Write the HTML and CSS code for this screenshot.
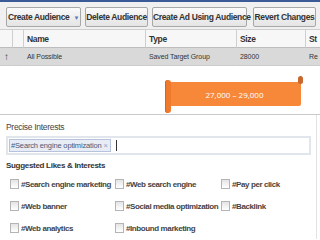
FILE: index.html
```html
<!DOCTYPE HTML>
<html>
<head>
    <meta charset="UTF-8">
    <title>Audience</title>
    <link rel="stylesheet" href="styles.css">
</head>
<body>
    <div class="topbar"></div>
    <div class="toolbar">
        <button class="tb-button w-create">Create Audience <span class="caret-down">&#9660;</span></button>
        <button class="tb-button w-delete">Delete Audience</button>
        <button class="tb-button w-ad">Create Ad Using Audience</button>
        <button class="tb-button w-revert">Revert Changes</button>
    </div>
    <div class="grid">
        <div class="cell head"></div>
        <div class="cell head"></div>
        <div class="cell head">Name</div>
        <div class="cell head">Type</div>
        <div class="cell head">Size</div>
        <div class="cell head">St</div>
        <div class="cell row arrow">&#8593;</div>
        <div class="cell row"></div>
        <div class="cell row">All Possible</div>
        <div class="cell row">Saved Target Group</div>
        <div class="cell row">28000</div>
        <div class="cell row">Re</div>
    </div>
    <div class="estimate">
        <div class="banner">27,000 – 29,000</div>
    </div>
    <div class="panel">
        <div class="label">Precise Interests</div>
        <div class="tokenbox">
            <span class="token">#Search engine optimization <span class="x">×</span></span>
            <span class="cursor"></span>
        </div>
        <div class="label strong">Suggested Likes &amp; Interests</div>
        <div class="suggest">
            <label class="item"><span class="box"></span>#Search engine marketing</label>
            <label class="item"><span class="box"></span>#Web search engine</label>
            <label class="item"><span class="box"></span>#Pay per click</label>
            <label class="item"><span class="box"></span>#Web banner</label>
            <label class="item"><span class="box"></span>#Social media optimization</label>
            <label class="item"><span class="box"></span>#Backlink</label>
            <label class="item"><span class="box"></span>#Web analytics</label>
            <label class="item"><span class="box"></span>#Inbound marketing</label>
        </div>
    </div>
</body>
</html>
```

FILE: styles.css
```css
html, body {margin: 0; width: 320px; height: 240px; overflow: hidden;}
body {background: #ffffff; font-family: "Liberation Sans", Arial, sans-serif; color: #333333;}
.topbar {height: 2px; background: #3b5b98;}
.toolbar {display: flex; gap: 4px; height: 28px; padding: 5px 0 0 6px; box-sizing: border-box; background: #f0f0f0; border-bottom: 1px solid #cfcfcf;}
.tb-button {height: 20px; padding: 0; border: 1px solid #a8a8a8; border-radius: 2px; background: linear-gradient(#fafafa, #e4e4e4); font-family: inherit; font-size: 8.5px; font-weight: bold; letter-spacing: -0.35px; color: #333333; white-space: nowrap;}
.w-create {width: 75px;}
.w-delete {width: 63px;}
.w-ad {width: 95px;}
.w-revert {width: 63px; margin-left: 2px;}
.caret-down {font-size: 6px; color: #5a7ab6; margin-left: 2px; vertical-align: middle;}
.grid {display: grid; grid-template-columns: 12px 11px 122px 91px 69px 15px; grid-auto-rows: 18px;}
.cell {display: flex; align-items: center; padding-left: 3px; border-left: 1px solid #cfcfcf; white-space: nowrap; overflow: hidden; font-size: 7px; letter-spacing: -0.1px;}
.cell:nth-child(6n+1) {border-left: none;}
.cell.head {background: #f7f7f7; border-bottom: 1px solid #bdbdbd; font-size: 8.5px; font-weight: bold; letter-spacing: -0.35px;}
.cell.row {background: #d9d9d9; border-left-color: #d9d9d9; border-bottom: 1px solid #cbcbcb;}
.cell.arrow {justify-content: center; padding-left: 1px; font-size: 10px; font-weight: bold; color: #3a3a3a;}
.estimate {height: 49px; padding-top: 16px; box-sizing: border-box; border-bottom: 1px solid #c9c9c9;}
.banner {position: relative; width: 133px; height: 24px; margin-left: 168px; background: #f7883a; border-radius: 0 2px 2px 0; color: #ffffff; font-family: "Open Sans", sans-serif; font-size: 8px; display: flex; align-items: center; justify-content: center;}
.banner::before {content: ""; position: absolute; left: -3px; top: -2px; width: 6px; height: 33px; border-radius: 3px; background: #ef7a2e; box-shadow: inset 1px 0 0 #d2652a;}
.banner::after {content: ""; position: absolute; right: -2px; top: -6px; width: 5px; height: 8px; border-radius: 3px; background: #c8672e;}
.panel {height: 124px; width: 317px; border-right: 1px solid #e3e3e3; padding: 4px 0 0 6px; box-sizing: border-box;}
.label {font-size: 8.5px; letter-spacing: -0.3px; color: #444444; height: 16px; line-height: 16px;}
.label.strong {font-weight: bold; font-size: 8px; color: #333333; margin-top: 3px;}
.tokenbox {display: flex; align-items: center; gap: 5px; width: 305px; height: 19px; margin-top: 1px; padding-left: 1px; box-sizing: border-box; border: 2px solid #e1e5ec;}
.token {height: 11px; line-height: 11px; padding: 0 2px 0 1px; background: #e7ecf5; border: 1px solid #b7c3dc; font-size: 7.5px; letter-spacing: -0.15px; color: #4a5a7a; white-space: nowrap;}
.token .x {color: #8da0c8;}
.cursor {width: 1px; height: 11px; background: #333333;}
.suggest {display: grid; grid-template-columns: 105px 106px 90px; row-gap: 6px; margin: 2px 0 0 4px;}
.item {display: flex; align-items: center; gap: 2px; height: 16px; font-size: 8px; font-weight: bold; letter-spacing: -0.4px; color: #444444; white-space: nowrap;}
.box {flex: none; width: 7px; height: 8px; border: 1px solid #b4b4b4; background: linear-gradient(#e4e4e4, #ffffff);}
```
